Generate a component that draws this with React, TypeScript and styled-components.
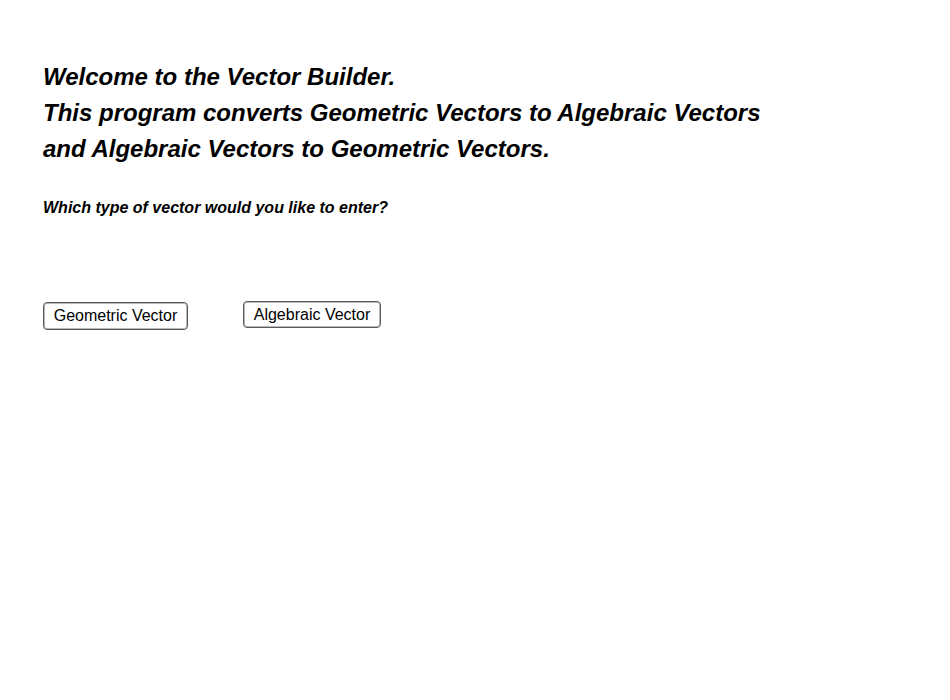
import styled, { createGlobalStyle } from "styled-components";

const GlobalStyle = createGlobalStyle`
  html, body {
    margin: 0;
    padding: 0;
    background: #ffffff;
  }
  body {
    font-family: "Liberation Sans", Arial, sans-serif;
    color: #000000;
  }
`;

const Page = styled.main`
  width: 950px;
  height: 700px;
  box-sizing: border-box;
  padding: 59px 0 0 43px;
`;

const Title = styled.h1`
  margin: 0;
  font-size: 24px;
  font-weight: bold;
  font-style: italic;
  line-height: 36px;
`;

const Question = styled.p`
  margin: 31px 0 0;
  font-size: 16px;
  font-weight: bold;
  font-style: italic;
  line-height: 20px;
`;

const Choices = styled.div`
  display: flex;
  align-items: flex-start;
  gap: 55px;
  margin-top: 83px;
`;

const Choice = styled.button<{ $lift?: number }>`
  box-sizing: border-box;
  height: ${({ $lift }) => ($lift ? 27 : 28)}px;
  margin-top: ${({ $lift }) => ($lift ? 0 : 1)}px;
  padding: 0 8px;
  font-family: "Liberation Sans", Arial, sans-serif;
  font-size: 16px;
  color: #000000;
  background: #ffffff;
  border: 1px solid #5a5a5a;
  box-shadow: inset 0 0 0 1px #b8b8b8;
  border-radius: 4px;
  cursor: pointer;
`;

export default function App() {
  return (
    <>
      <GlobalStyle />
      <Page>
        <Title>
          Welcome to the Vector Builder.
          <br />
          This program converts Geometric Vectors to Algebraic Vectors
          <br />
          and Algebraic Vectors to Geometric Vectors.
        </Title>
        <Question>Which type of vector would you like to enter?</Question>
        <Choices>
          <Choice style={{ width: 145 }}>Geometric Vector</Choice>
          <Choice $lift={1} style={{ width: 138 }}>
            Algebraic Vector
          </Choice>
        </Choices>
      </Page>
    </>
  );
}
